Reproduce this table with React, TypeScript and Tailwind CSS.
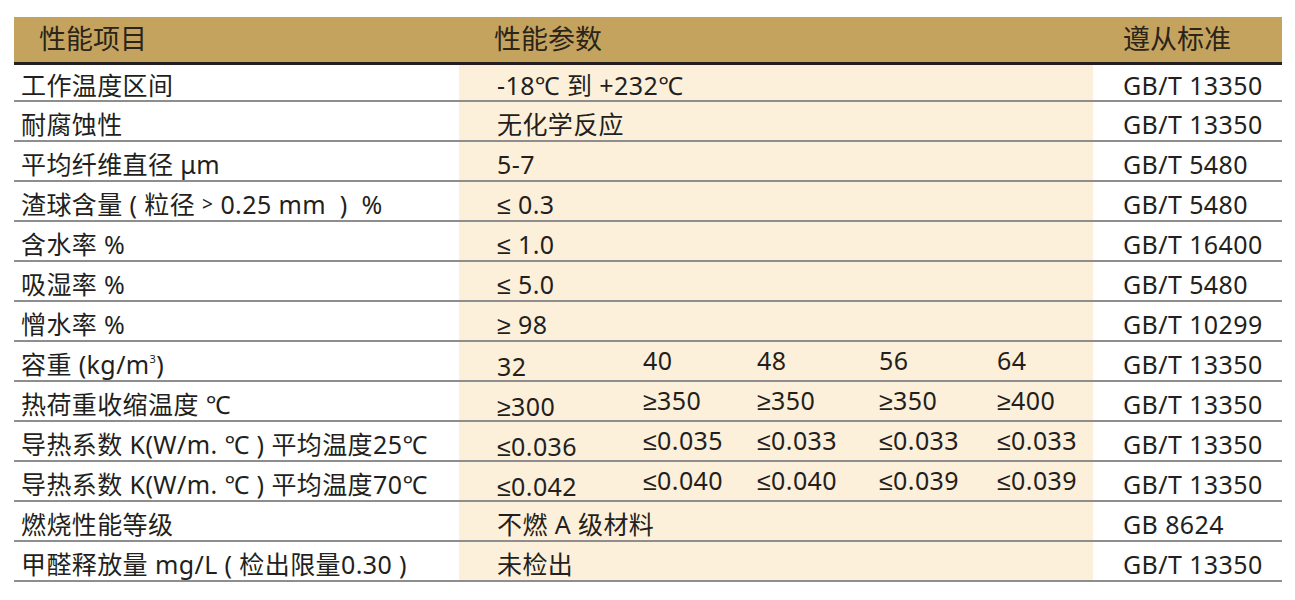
import React from "react";

type Row = {
  name: React.ReactNode;
  value?: string;
  values?: string[];
  standard: string;
};

const rows: Row[] = [
  { name: "工作温度区间", value: "-18℃ 到 +232℃", standard: "GB/T 13350" },
  { name: "耐腐蚀性", value: "无化学反应", standard: "GB/T 13350" },
  { name: "平均纤维直径 μm", value: "5-7", standard: "GB/T 5480" },
  {
    name: (
      <>
        渣球含量 ( 粒径
        <span className="mx-[7px] text-[19px] font-[Noto_Sans,sans-serif]">&gt;</span>
        0.25 mm{"\u00a0\u00a0"}){"\u00a0\u00a0"}%
      </>
    ),
    value: "≤ 0.3",
    standard: "GB/T 5480",
  },
  { name: "含水率 %", value: "≤ 1.0", standard: "GB/T 16400" },
  { name: "吸湿率 %", value: "≤ 5.0", standard: "GB/T 5480" },
  { name: "憎水率 %", value: "≥ 98", standard: "GB/T 10299" },
  {
    name: (
      <>
        容重 (kg/m<sup className="text-[11px] align-[10px]">3</sup>)
      </>
    ),
    values: ["32", "40", "48", "56", "64"],
    standard: "GB/T 13350",
  },
  {
    name: "热荷重收缩温度 ℃",
    values: ["≥300", "≥350", "≥350", "≥350", "≥400"],
    standard: "GB/T 13350",
  },
  {
    name: "导热系数 K(W/m. ℃ ) 平均温度25℃",
    values: ["≤0.036", "≤0.035", "≤0.033", "≤0.033", "≤0.033"],
    standard: "GB/T 13350",
  },
  {
    name: "导热系数 K(W/m. ℃ ) 平均温度70℃",
    values: ["≤0.042", "≤0.040", "≤0.040", "≤0.039", "≤0.039"],
    standard: "GB/T 13350",
  },
  { name: "燃烧性能等级", value: "不燃 A 级材料", standard: "GB 8624" },
  {
    name: "甲醛释放量 mg/L ( 检出限量0.30 )",
    value: "未检出",
    standard: "GB/T 13350",
  },
];

export default function App() {
  return (
    <div className="w-[1295px] h-[600px] bg-white pt-[17px] pl-[14px] font-[Noto_Sans,Liberation_Sans,Noto_Sans_CJK_SC,sans-serif] text-[#231f20]">
      <div className="w-[1268px]">
        {/* header */}
        <div className="flex h-[48px] bg-[#c4a35f] border-b-[3px] border-[#231f20] text-[27px] text-[#2b2418]">
          <div className="w-[445px] pl-[25px] flex items-center">性能项目</div>
          <div className="w-[634px] pl-[35px] flex items-center">性能参数</div>
          <div className="flex-1 pl-[30px] flex items-center">遵从标准</div>
        </div>

        {rows.map((row, i) => (
          <div
            key={i}
            className={`flex border-b-2 border-[#8e8e8e] text-[25px] leading-none tracking-[0.4px] ${
              i === 0 ? "h-[37px]" : "h-[40px]"
            }`}
          >
            <div className="w-[445px] pl-[7px] pt-[6px] flex items-center whitespace-nowrap">
              {row.name}
            </div>
            <div className="w-[634px] bg-[#fdf0da] pl-[38px] pt-[6px] flex items-center whitespace-nowrap">
              {row.values ? (
                <div className="grid grid-cols-[146px_114px_122px_118px_1fr] items-center self-stretch">
                  {row.values.map((v, j) => (
                    <div key={j} className={j === 0 ? "pt-[2px]" : "pb-[10px]"}>
                      {v}
                    </div>
                  ))}
                </div>
              ) : (
                row.value
              )}
            </div>
            <div className="flex-1 pl-[30px] pt-[6px] flex items-center whitespace-nowrap">
              {row.standard}
            </div>
          </div>
        ))}
      </div>
    </div>
  );
}
